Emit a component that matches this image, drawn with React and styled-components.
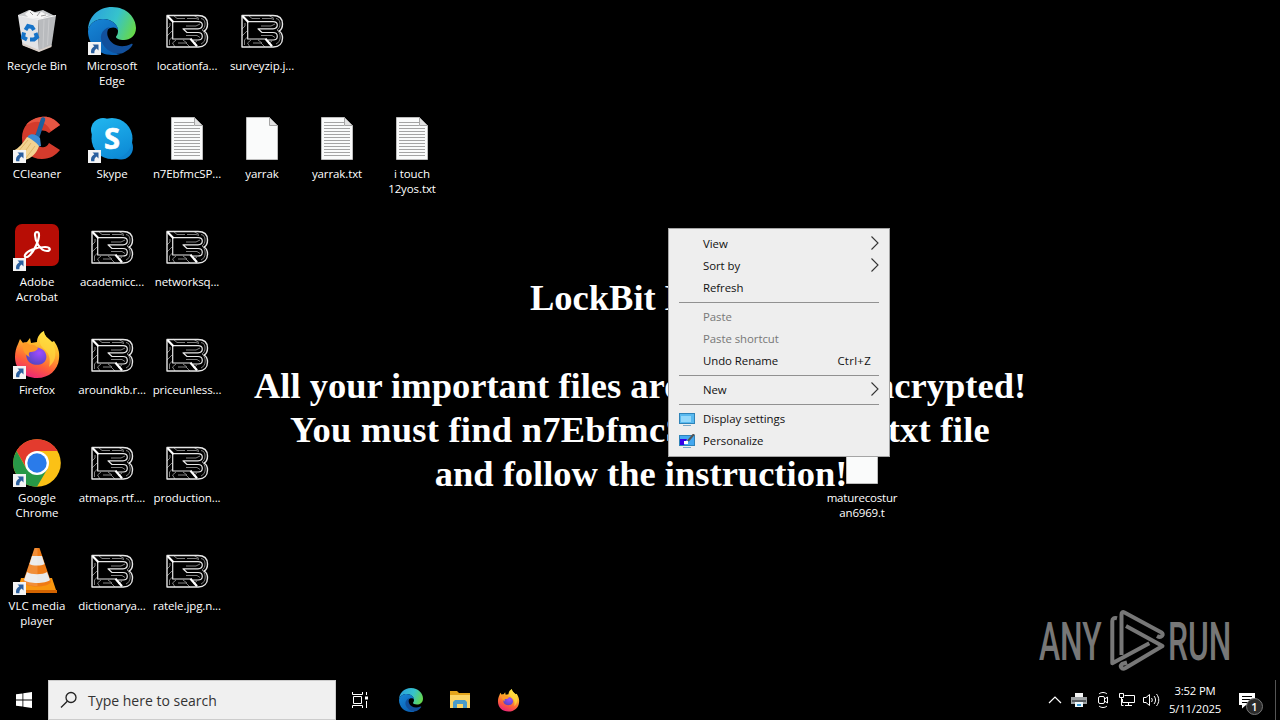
import React from 'react';
import styled, { createGlobalStyle, css } from 'styled-components';

const GlobalStyle = createGlobalStyle`
    * {
        box-sizing: border-box;
    }
    body {
        margin: 0;
        background: #000;
        overflow: hidden;
        font-family: 'Open Sans', 'Noto Sans', sans-serif;
    }
    svg {
        display: block;
        flex: none;
    }
`;

const Screen = styled.div`
    position: relative;
    width: 1280px;
    height: 720px;
    display: flex;
    flex-direction: column;
    background: #000;
    overflow: hidden;
`;

const Desktop = styled.main`
    flex: 1;
    display: grid;
    grid-template-columns: repeat(17, 75px);
    grid-template-rows: repeat(6, 108px);
    padding-top: 7px;
`;

const Shortcut = styled.div`
    grid-column: ${(p) => p.$col};
    grid-row: ${(p) => p.$row};
    display: flex;
    flex-direction: column;
    align-items: center;
    z-index: 1;
`;

const Picture = styled.div`
    position: relative;
    width: 48px;
    height: 48px;
    margin-left: -1px;
`;

const Arrow = styled.svg`
    position: absolute;
    left: 0;
    bottom: 0;
`;

const Label = styled.div`
    margin-top: 3px;
    margin-left: -1px;
    color: #fff;
    font-size: 11.5px;
    line-height: 15px;
    letter-spacing: ${(p) => p.$track ?? -0.1}px;
    text-align: center;
    white-space: pre;
`;

const Wallpaper = styled.div`
    position: absolute;
    top: 276px;
    left: 0;
    width: 1280px;
    color: #fff;
    font-family: 'Liberation Serif', serif;
    font-weight: bold;
    font-size: 36.5px;
    line-height: 44px;
    text-align: center;
    white-space: pre;
`;

const Line = styled.div`
    height: 44px;
    padding-left: ${(p) => p.$indent || 0}px;
    letter-spacing: ${(p) => p.$track || 0}px;
`;

const Watermark = styled.div`
    position: absolute;
    left: 1039px;
    top: 608px;
    height: 66px;
    display: flex;
    align-items: center;
    color: #777;
`;

const Word = styled.div`
    width: ${(p) => p.$width}px;
    font-family: Roboto, sans-serif;
    font-weight: 500;
    font-size: 53px;
    line-height: 66px;
    padding-top: 1px;
    white-space: nowrap;
    transform: scaleX(${(p) => p.$squeeze});
    transform-origin: 0 50%;
`;

const Menu = styled.nav`
    position: absolute;
    left: 668px;
    top: 228px;
    width: 222px;
    padding: 4px 0;
    background: #eee;
    border: 1px solid #a5a5a5;
    z-index: 2;
`;

const Item = styled.div`
    display: flex;
    align-items: center;
    height: 22px;
    padding: 0 10px 2px;
    color: ${(p) => (p.$disabled ? '#777' : '#111')};
    font-size: 11.4px;
    letter-spacing: -0.05px;
    white-space: nowrap;
`;

const Glyph = styled.div`
    width: 24px;
    padding-top: 1px;
`;

const Keys = styled.span`
    margin-left: auto;
    margin-right: 8px;
    letter-spacing: 0.3px;
`;

const Chevron = styled.svg`
    margin-left: auto;
`;

const Rule = styled.div`
    height: 1px;
    margin: 3px 10px;
    background: #919191;
`;

const Taskbar = styled.footer`
    display: flex;
    align-items: stretch;
    height: 40px;
    background: #000;
    z-index: 1;
`;

const Slot = styled.div`
    display: flex;
    align-items: center;
    justify-content: center;
    width: ${(p) => p.$width || 48}px;
`;

const Search = styled.div`
    display: flex;
    align-items: center;
    width: 288px;
    padding-left: 11px;
    gap: 10px;
    background: #f0f0f0;
    border: 1px solid #ccc;
    color: #333;
    font-size: 14px;
`;

const Tray = styled.div`
    display: flex;
    align-items: stretch;
    margin-left: auto;
`;

const Clock = styled.div`
    width: 64px;
    padding-top: 2px;
    color: #fff;
    font-size: 11.3px;
    line-height: 18px;
    letter-spacing: -0.15px;
    text-align: center;
`;

const ActionCenter = styled.div`
    position: relative;
    display: flex;
    align-items: center;
    width: 49px;
    padding-left: 12px;
    margin-right: 4px;
    ${(p) =>
        p.$peek &&
        css`
            border-right: 1px solid #555;
        `}
`;

const Badge = styled.div`
    position: absolute;
    left: 19px;
    top: 18px;
    width: 17px;
    height: 17px;
    border: 1px solid #777;
    border-radius: 50%;
    background: #2b2b2b;
    color: #fff;
    font-size: 11px;
    font-weight: 600;
    line-height: 15px;
    text-align: center;
`;

const ShortcutArrow = () => (
    <Arrow width="13" height="13" viewBox="0 0 13 13">
        <rect width="13" height="13" fill="#f4f4f4" />
        <path d="M4.500 2.500H10.500v6L8.600 6.600C6.800 7.800 6.200 9 6.400 11.300H3.200C2.500 8.500 3.500 6 6.300 4.300z" fill="#2a5f9e" />
    </Arrow>
);

const Bin = () => (
    <svg width="48" height="48" viewBox="0 0 48 48">
        <path d="M5 8l11-5 6 2 8-2 6 3 6 3-20 5z" fill="#c9cbcd" />
        <path d="M12 7l5-4 5 3 7-1 3 2 4 1-8 4-12-1z" fill="#f7f7f7" />
        <path d="M17 5l3 3M27 5l-3 4M33 8l-5 1" stroke="#999" />
        <path d="M5 8.500l20 4 1 32L9.500 38z" fill="#e3e4e6" />
        <path d="M43 8.500l-18 4 1 32L38.500 39z" fill="#b9bbbe" />
        <path d="M5 8.500l20 4L43 8.500" fill="none" stroke="#f4f4f4" />
        <path d="M31 13l-1 28M36 12l-1.500 26" stroke="#cbccce" />
        <path d="M9.500 36L26 43l12.500-5v2L26 45 9.700 38.500z" fill="#d9cfc8" />
        <g fill="none" stroke="#1673c8" strokeWidth="4">
            <path d="M12.500 23l2.500-4 4 1 2 3" />
            <path d="M22.500 26l1.500 4-3 2.500h-4" />
            <path d="M14 32.500l-4-2 1-5" />
        </g>
    </svg>
);

const Edge = ({ size = 48 }) => (
    <svg width={size} height={size} viewBox="0 0 48 48">
        <defs>
            <linearGradient id="edgeTop" x1="0" y1="0.300" x2="1" y2="0.600">
                <stop offset="0" stopColor="#2aa0dc" />
                <stop offset="0.550" stopColor="#36c3cc" />
                <stop offset="1" stopColor="#66d84c" />
            </linearGradient>
            <linearGradient id="edgeLeft" x1="0" y1="0" x2="0.600" y2="1">
                <stop offset="0" stopColor="#1787d6" />
                <stop offset="1" stopColor="#0b62b6" />
            </linearGradient>
        </defs>
        <path d="M0 24C0 10 10 0 24 0c15 0 24 11 24 21 0 8-6 12-12 12-5 0-8-1.500-8-3 0-1 2-2 2-6 0-6-6-12-15-12C7 12 1 17 0 24z" fill="url(#edgeTop)" />
        <path d="M0 24c1-7 7-12 15-12 9 0 15 6 15 11-2-3-5-3-8-2-5 2-6 8-4 14 2 7 8 11 14 12-2 1-5 1-8 1C10 48 0 37 0 24z" fill="url(#edgeLeft)" />
        <path d="M22 20c-9 2-12 11-6 19 5 7 15 9 19 7 4-2 8-5 9.500-8 .500-1-.500-1.500-1.500-1-10 5-20 1-23-7-1.500-4-.500-8 2-10z" fill="#12509c" />
    </svg>
);

const LockFile = () => (
    <svg width="48" height="48" viewBox="0 0 48 48" fill="none" stroke="#e6e6e6" strokeLinejoin="round">
        <g stroke="#8f8f8f" strokeWidth="0.900">
            <path d="M10 8l4 3.500h8M24 11.500h9l3 1M27 8.500h4l5 3" />
            <path d="M4 22l3-3v-3M4 29l5-5M6.500 38v-5l3-3M12 40l-2.500-4L13 33" />
            <path d="M15 36h8l4 4M20 33l4 3M23 19h10l4-2M23 28.500h11l3 2M30 37l4-3" />
            <path d="M38 11.500c3 .500 4 2.500 4 5.500s-1 4.500-3 6c2 1.500 3.200 4 3.200 7s-1.500 6-4.200 7" />
        </g>
        <path d="M4 8.500h31c6.500 0 9.500 3.500 9.500 8.500 0 3.500-1.500 6-3.500 7 2.500 1.500 3.500 4 3.500 7 0 5.500-3.500 9-9 9H4z" strokeWidth="1.400" />
        <path d="M9.700 14.700H35c3.500 0 4.300 1.600 4.300 3.400S38 21.800 35 21.800H20l4 3.700h11c3 0 4.300 1.500 4.300 3.700s-1.500 3.800-4.300 3.800h-5" strokeWidth="1.200" />
        <path d="M9.700 14.700v17.300H28" strokeWidth="1.200" />
        <path d="M4.500 9l6 6.200M27.500 31.700l6.500 7.500" stroke="#fff" strokeWidth="2.200" />
    </svg>
);

const Page = ({ blank }) => (
    <svg width="48" height="48" viewBox="0 0 48 48">
        <path d="M8.500 2.500h23l8 8v34h-31z" fill="#fafbfb" stroke="#bdbdbd" />
        {!blank && <path d="M11 7.500h20M11 10.500h20M11 13.500h26M11 16.500h26M11 19.500h26M11 22.500h26M11 25.500h26M11 28.500h26M11 31.500h26M11 34.500h26M11 37.500h26M11 40.500h26" stroke="#a4a4a4" />}
        <path d="M31.500 2.500v8h8z" fill="#e2e2e2" stroke="#a5a5a5" />
    </svg>
);

const CCleaner = () => (
    <svg width="48" height="48" viewBox="0 0 48 48">
        <path d="M47 10C41 3 35 1 28 2 17 4 9 11 9 23c0 13 8 21 20 21 8 0 14-4 18-9l-11-7c-2 4-5 5-8 4-5-1-7-5-6-10 1-6 8-9 14-4z" fill="#d33b2c" />
        <path d="M47 10C41 3 35 1 28 2c-7 1-12 4-15 8 11-6 20-4 25 6z" fill="#e65643" />
        <path d="M30 4.500l-6 18" stroke="#1d609f" strokeWidth="4.500" strokeLinecap="round" />
        <path d="M15 21c3-3 8-2 12 2l1 8-5 1-10-6z" fill="#3d8bd4" />
        <path d="M14 22c3 1 9 5 12 9-2 7-8 13-15 14C5 43 1 40 0 36c6-3 10-8 14-14z" fill="#f2d391" />
        <path d="M15 25L4 38M18 28L8 42M22 31L13 43" stroke="#dfb667" />
    </svg>
);

const SkypeLetter = styled.text`
    font-family: 'Open Sans', sans-serif;
    font-size: 29px;
    font-weight: 700;
    fill: #fff;
    stroke: #fff;
    stroke-width: 0.6px;
`;

const Skype = () => (
    <svg width="48" height="48" viewBox="0 0 48 48">
        <defs>
            <linearGradient id="skype" x1="0.200" y1="0" x2="0.600" y2="1">
                <stop offset="0" stopColor="#20b4ee" />
                <stop offset="1" stopColor="#0d8bd6" />
            </linearGradient>
        </defs>
        <circle cx="15" cy="15" r="12" fill="#1fb0ec" />
        <circle cx="33" cy="32.500" r="12" fill="#0d84d0" />
        <circle cx="24" cy="23.500" r="20.500" fill="url(#skype)" />
        <SkypeLetter x="24" y="34" textAnchor="middle">S</SkypeLetter>
    </svg>
);

const Acrobat = () => (
    <svg width="48" height="48" viewBox="0 0 48 48">
        <rect x="2" y="1" width="44" height="42" rx="7" fill="#b70d05" />
        <path d="M12 32c2-4 11-8 20-8 6 0 6 4 2 4C27 28 22 18 22 12c0-4 4-4 4 0 0 6-5 16-9 20-3 3-6 3-5 0z" fill="none" stroke="#fff" strokeWidth="2.200" />
    </svg>
);

const Firefox = ({ size = 48 }) => (
    <svg width={size} height={size} viewBox="0 0 48 48">
        <defs>
            <linearGradient id="fox" x1="0.700" y1="0" x2="0.300" y2="1">
                <stop offset="0" stopColor="#fff14a" />
                <stop offset="0.350" stopColor="#ffb52c" />
                <stop offset="0.680" stopColor="#ff6038" />
                <stop offset="1" stopColor="#e9217c" />
            </linearGradient>
            <radialGradient id="globe" cx="0.650" cy="0.300" r="0.800">
                <stop offset="0" stopColor="#a04cff" />
                <stop offset="1" stopColor="#4f45bd" />
            </radialGradient>
        </defs>
        <path d="M5 13l2-5 3 4 4-1 3-4 1 5 6-1C24 6 27 2 31 0c0 5 4 7 8 11l2-1c4 6 6 11 5 18-1 11-10 19-22 19C11 47 2 38 2 26c0-5 1-9 3-13z" fill="url(#fox)" />
        <path d="M14 21c5-6 14-6 18 0 3 5 1 11-5 12.500-6 1-11-1-13-5.500-1-3-1-4 0-7z" fill="url(#globe)" />
        <path d="M10 12c2-1 5 0 7 2 3-1 5 0 8 3-1 3-5 4-8 4-2 1-1 4 0 5-5-2-8-6-7-14z" fill="#ff9b27" />
        <path d="M31 0c0 5 4 7 8 11 5 9 5 18-3 25 2-8 0-14-5-18-4-4-7-8 0-18z" fill="#ffdb3e" opacity="0.700" />
    </svg>
);

const Chrome = () => (
    <svg width="48" height="48" viewBox="0 0 48 48">
        <circle cx="24" cy="24" r="23.800" fill="#fbc116" />
        <path d="M3.500 12A23.800 23.800 0 0 1 44.600 12H24L14 30z" fill="#e33b2e" />
        <path d="M3.500 12A23.800 23.800 0 0 0 24 47.800L34.400 30 24 24 13.600 30z" fill="#279847" />
        <circle cx="24" cy="24" r="12" fill="#fff" />
        <circle cx="24" cy="24" r="9.700" fill="#2a7bea" />
    </svg>
);

const Vlc = () => (
    <svg width="48" height="48" viewBox="0 0 48 48">
        <path d="M8 31h31l5 15H4z" fill="#f8960f" />
        <path d="M4 43h40v3H4z" fill="#d46400" />
        <path d="M21.500 1h5l11.500 34c-3 6-25 6-28 0z" fill="#ef7b16" />
        <path d="M19 9h10l2.500 8c-3 2-12 2-15 0z" fill="#e9e9e9" />
        <path d="M14 25c4 3 16 3 20 0l3 8c-4 4-22 4-26 0z" fill="#e9e9e9" />
        <path d="M21.500 1h3v38c-6 0-12-1-14-4z" fill="#fff" opacity="0.150" />
    </svg>
);

const shortcuts = [
    { col: 1, row: 1, icon: <Bin />, label: 'Recycle Bin', track: 0 },
    { col: 1, row: 2, icon: <CCleaner />, label: 'CCleaner', link: true, track: 0 },
    { col: 1, row: 3, icon: <Acrobat />, label: 'Adobe\nAcrobat', link: true, track: 0 },
    { col: 1, row: 4, icon: <Firefox />, label: 'Firefox', link: true },
    { col: 1, row: 5, icon: <Chrome />, label: 'Google\nChrome', link: true, track: 0 },
    { col: 1, row: 6, icon: <Vlc />, label: 'VLC media\nplayer', link: true, track: 0.05 },
    { col: 2, row: 1, icon: <Edge />, label: 'Microsoft\nEdge', link: true, track: 0 },
    { col: 2, row: 2, icon: <Skype />, label: 'Skype', link: true },
    { col: 2, row: 3, icon: <LockFile />, label: 'academicc...' },
    { col: 2, row: 4, icon: <LockFile />, label: 'aroundkb.r...' },
    { col: 2, row: 5, icon: <LockFile />, label: 'atmaps.rtf....' },
    { col: 2, row: 6, icon: <LockFile />, label: 'dictionarya...' },
    { col: 3, row: 1, icon: <LockFile />, label: 'locationfa...' },
    { col: 3, row: 2, icon: <Page />, label: 'n7EbfmcSP...' },
    { col: 3, row: 3, icon: <LockFile />, label: 'networksq...' },
    { col: 3, row: 4, icon: <LockFile />, label: 'priceunless...' },
    { col: 3, row: 5, icon: <LockFile />, label: 'production...' },
    { col: 3, row: 6, icon: <LockFile />, label: 'ratele.jpg.n...' },
    { col: 4, row: 1, icon: <LockFile />, label: 'surveyzip.j...' },
    { col: 4, row: 2, icon: <Page blank />, label: 'yarrak' },
    { col: 5, row: 2, icon: <Page />, label: 'yarrak.txt' },
    { col: 6, row: 2, icon: <Page />, label: 'i touch\n12yos.txt' },
    { col: 12, row: 5, icon: <Page blank />, label: 'maturecostur\nan6969.t', track: -0.2 },
];

const Submenu = () => (
    <Chevron width="9" height="14" viewBox="0 0 9 14" fill="none" stroke="#333" strokeWidth="1.100">
        <path d="M1.500 0.500l6.500 6.500-6.500 6.500" />
    </Chevron>
);

const Display = ({ brush }) => (
    <svg width="16" height="14" viewBox="0 0 16 14">
        <rect x="0.500" y="1.500" width="15" height="10" fill={brush ? '#43a8f0' : '#58b9ef'} stroke="#2f83b8" />
        {brush ? <path d="M1 5h7l-3 6H1z" fill="#3500e8" /> : <path d="M2 4h10v6H2z" fill="#93d8fb" />}
        {brush && <path d="M5 7h4v3H5z" fill="#fff" />}
        {brush && <path d="M9 7l6-7" stroke="#555" strokeWidth="2" />}
        <path d="M4 13.500h8" stroke="#7ba9c8" />
    </svg>
);

const TriangleLogo = () => (
    <svg width="60" height="66" viewBox="0 0 60 66" fill="none" stroke="#777" strokeWidth="4" strokeLinejoin="round">
        <path d="M9 10.300C6 9.500 4.300 10.500 4.300 13v42.300l37-20" />
        <path d="M13.500 47V6.500c0-2 1-3 3-2L53.500 24.500c3 2 0 6-4.500 3.500" />
        <path d="M18 18l36.500 20-37 22c-4 2-6-2-3.500-4l5-1.500" />
    </svg>
);

export default function App() {
    return (
        <Screen>
            <GlobalStyle />
            <Wallpaper>
                <Line $indent={4}>LockBit Black</Line>
                <Line />
                <Line>All your important files are stolen and encrypted!</Line>
                <Line $track={0.25}>You must find n7EbfmcSP.README.txt file</Line>
                <Line $indent={2}>and follow the instruction!</Line>
            </Wallpaper>
            <Desktop>
                {shortcuts.map((s) => (
                    <Shortcut key={s.label} $col={s.col} $row={s.row}>
                        <Picture>
                            {s.icon}
                            {s.link && <ShortcutArrow />}
                        </Picture>
                        <Label $track={s.track}>{s.label}</Label>
                    </Shortcut>
                ))}
            </Desktop>
            <Watermark>
                <Word $width={69} $squeeze={0.6}>ANY</Word>
                <TriangleLogo />
                <Word $width={62} $squeeze={0.6}>RUN</Word>
            </Watermark>
            <Menu>
                <Item><Glyph />View<Submenu /></Item>
                <Item><Glyph />Sort by<Submenu /></Item>
                <Item><Glyph />Refresh</Item>
                <Rule />
                <Item $disabled><Glyph />Paste</Item>
                <Item $disabled><Glyph />Paste shortcut</Item>
                <Item><Glyph />Undo Rename<Keys>Ctrl+Z</Keys></Item>
                <Rule />
                <Item><Glyph />New<Submenu /></Item>
                <Rule />
                <Item><Glyph><Display /></Glyph>Display settings</Item>
                <Item><Glyph><Display brush /></Glyph>Personalize</Item>
            </Menu>
            <Taskbar>
                <Slot>
                    <svg width="16" height="16" viewBox="0 0 16 16" fill="#fff">
                        <path d="M0 2.300L6.500 1.400v6.200H0zM7.300 1.300L16 0v7.600H7.300zM0 8.400h6.500v6.200L0 13.700zM7.300 8.400H16V16l-8.700-1.300z" />
                    </svg>
                </Slot>
                <Search>
                    <svg width="18" height="18" viewBox="0 0 18 18" fill="none" stroke="#222" strokeWidth="1.300">
                        <circle cx="11" cy="6.500" r="5" />
                        <path d="M7.300 10.200L1 16.500" />
                    </svg>
                    Type here to search
                </Search>
                <Slot>
                    <svg width="16" height="16" viewBox="0 0 16 16" fill="none" stroke="#fff">
                        <path d="M0.500 0v2.500h10V0M0.500 16v-2.500h10V16M1.500 4.500h8v7h-8zM14.500 0v3M14.500 9v7" />
                        <path d="M13 4.500h3v3h-3z" fill="#fff" stroke="none" />
                    </svg>
                </Slot>
                <Slot $width={54}><Edge size={24} /></Slot>
                <Slot $width={44}>
                    <svg width="22" height="20" viewBox="0 0 22 20">
                        <path d="M1 1h7l2 2h11v6H1z" fill="#e3a51c" />
                        <path d="M1 5h20v13H1z" fill="#fbd566" />
                        <path d="M4 18v-6l2-2h10l2 2v6h-4v-4H8v4z" fill="#4a9cc9" />
                    </svg>
                </Slot>
                <Slot $width={53}><Firefox size={23} /></Slot>
                <Tray>
                    <Slot $width={24}>
                        <svg width="14" height="8" viewBox="0 0 14 8" fill="none" stroke="#fff" strokeWidth="1.200">
                            <path d="M1 7l6-6 6 6" />
                        </svg>
                    </Slot>
                    <Slot $width={24}>
                        <svg width="16" height="16" viewBox="0 0 16 16">
                            <path d="M4 1h8v5H4z" fill="#f4f4f4" />
                            <path d="M0 5h16v7H0z" fill="#9da1a3" />
                            <path d="M1 8h14v2H1z" fill="#565b60" />
                            <path d="M4 10h8v5H4z" fill="#eef9ff" />
                            <path d="M6 12h4v2H6z" fill="#3c9ad2" />
                        </svg>
                    </Slot>
                    <Slot $width={24}>
                        <svg width="16" height="16" viewBox="0 0 16 16" fill="none" stroke="#fff">
                            <rect x="3.500" y="4.500" width="6" height="7" rx="1.500" />
                            <path d="M9.500 7l3-2v6l-3-2M4 2c2-2 6-2 8 0M4 14c2 2 6 2 8 0" />
                        </svg>
                    </Slot>
                    <Slot $width={24}>
                        <svg width="16" height="16" viewBox="0 0 16 16" fill="none" stroke="#fff">
                            <path d="M5.500 3.500h10v7h-12V7M9.500 10.500v3M6 13.500h7M0.500 1.500h4v4h-4zM2.500 5.500v8h2" />
                        </svg>
                    </Slot>
                    <Slot $width={24}>
                        <svg width="17" height="16" viewBox="0 0 17 16" fill="none" stroke="#fff">
                            <path d="M0.500 5.500h2.500l3.500-3v11L3 10.500H0.500zM8.500 6c1 1.500 1 2.500 0 4M11 4c2 2.500 2 5.500 0 8M13.500 2c3 4 3 8 0 12" />
                        </svg>
                    </Slot>
                    <Clock>
                        3:52 PM
                        <br />
                        5/11/2025
                    </Clock>
                    <ActionCenter $peek>
                        <svg width="16" height="17" viewBox="0 0 16 17">
                            <path d="M0 1h16v12H7l-4 3.500V13H0z" fill="#fff" />
                            <path d="M3 4.500h10M3 7.500h10M3 10.500h6" stroke="#000" />
                        </svg>
                        <Badge>1</Badge>
                    </ActionCenter>
                </Tray>
            </Taskbar>
        </Screen>
    );
}
